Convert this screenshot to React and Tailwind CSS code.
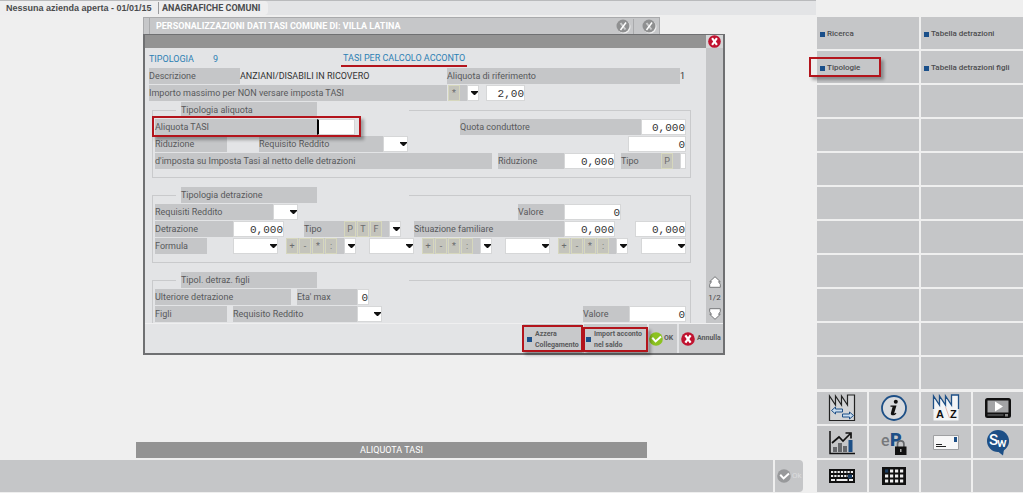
import clsx from 'clsx';

const menuItems = [
  'Ricerca',
  'Tabella detrazioni',
  'Tipologie',
  'Tabella detrazioni figli',
  ...Array(18).fill(''),
];

// Small building blocks of the form
function Row({ children }) {
  return <div className="flex h-4 items-stretch">{children}</div>;
}

function Label({ htmlFor, className, children }) {
  const classes = clsx('bg-[#c5c6c8] leading-4 whitespace-nowrap text-[#58595b]', className);
  return htmlFor ? (
    <label htmlFor={htmlFor} className={classes}>{children}</label>
  ) : (
    <span className={classes}>{children}</span>
  );
}

function Field({ id, value = '', className }) {
  return (
    <input
      id={id}
      type="text"
      defaultValue={value}
      aria-label={id}
      className={clsx(
        'min-w-0 border border-[#d6d7d8] bg-white pt-px text-right font-["Liberation_Mono",monospace] text-[11px] leading-4 text-[#333] outline-none',
        className
      )}
    />
  );
}

function Combo({ id, className }) {
  return (
    <span className={clsx('grid border border-[#d6d7d8] bg-white', className)}>
      <select id={id} aria-label={id} className="col-start-1 row-start-1 w-full min-w-0 appearance-none outline-none">
        <option></option>
      </select>
      <svg viewBox="0 0 7 4" className="pointer-events-none col-start-1 row-start-1 h-1 w-[7px] self-center justify-self-end">
        <path d="M0 0h7v1L4 4H3L0 1z" fill="#111" />
      </svg>
    </span>
  );
}

function Keys({ keys, className }) {
  return (
    <span className={clsx('flex gap-px bg-[#c5c6c8]', className)}>
      {keys.map((key) => (
        <button
          key={key}
          type="button"
          className="w-3 border border-[#d6d7bd] bg-[#c4c4bc] text-center leading-3 text-[#6b6c6e]"
        >
          {key}
        </button>
      ))}
    </span>
  );
}

function Group({ title, className, children }) {
  return (
    <fieldset className={clsx('ml-[3px] border border-[#c9cacc] pr-1 pl-0.5', className)}>
      <legend className="ml-[21px] w-[233px] px-[5px]">
        <Label className="block h-4 w-[136px]">{title}</Label>
      </legend>
      <div className="flex flex-col gap-px pt-px">{children}</div>
    </fieldset>
  );
}

// Red frame drawn around a highlighted control
function Highlight({ className }) {
  return (
    <span
      className={clsx(
        'pointer-events-none absolute border-2 border-[#b3141c] shadow-[3px_3px_3px_rgba(0,0,0,0.3)]',
        className
      )}
    />
  );
}

function Bullet() {
  return <span className="size-[5px] shrink-0 bg-[#1a4f8a]" />;
}

function CrossIcon({ color, className }) {
  return (
    <svg viewBox="0 0 14 14" className={className}>
      <circle cx="7" cy="7" r="6.8" fill={color} />
      <path d="M4.4 3.4l5.2 7.2M9.6 3.4l-5.2 7.2" stroke="#fff" strokeWidth="2.3" />
    </svg>
  );
}

function GreyCross() {
  return (
    <svg viewBox="0 0 15 15" className="size-[15px]">
      <circle cx="8" cy="8" r="6.5" fill="#eee" />
      <circle cx="7" cy="7" r="6.5" fill="#8f9091" />
      <path d="M4.5 4l5 6.5" stroke="#c9cacb" strokeWidth="2" />
      <path d="M10 3.5L4.5 11" stroke="#fff" strokeWidth="1.5" />
    </svg>
  );
}

function CheckIcon({ color, className }) {
  return (
    <svg viewBox="0 0 14 14" className={className}>
      <circle cx="7" cy="7" r="6.8" fill={color} />
      <path d="M3.2 5.8L6.6 9.4 12 4.4" fill="none" stroke="#fff" strokeWidth="2" />
    </svg>
  );
}

const tools = [
  {
    name: 'Cambio azienda',
    icon: (
      <>
        <path d="M1.5 26.5V2l6 9V2l6 9V2l6 9V1h7v25.5z" fill="#d3d4d6" stroke="#222" strokeWidth="1.2" />
        <path d="M3.5 16.5l4-3.5v2h7v3h-7v2z" fill="#c9dcef" stroke="#1d4f86" />
        <path d="M25.5 21.5l-4-3.5v2h-7v3h7v2z" fill="#c9dcef" stroke="#1d4f86" />
      </>
    ),
  },
  {
    name: 'Informazioni',
    icon: (
      <>
        <circle cx="14" cy="14" r="12" fill="#d9dbde" stroke="#1d4f86" strokeWidth="1.8" />
        <circle cx="15.8" cy="7.8" r="2" fill="#111" />
        <path d="M10.5 11.5h6l-2.2 7.3c-.2.9.5.9 1.5 0l.6.6c-1.7 2.6-6.3 2.8-5.5-.5l1.7-6.2h-2.1z" fill="#111" />
      </>
    ),
  },
  {
    name: 'Aziende A-Z',
    icon: (
      <>
        <path d="M1.5 26.5V2l6 9V2l6 9V2l6 9V1h7v25.5z" fill="#f4f5f6" />
        <path d="M1.5 15V2l6 9V2l6 9V2l6 9V1h7v14" fill="none" stroke="#1d4f86" strokeWidth="1.3" />
        <path d="M13.5 13l4 11" stroke="#e3b9b0" />
        <text x="4" y="24" fontSize="11" fontWeight="bold" fill="#111">A</text>
        <text x="18" y="24" fontSize="11" fontWeight="bold" fill="#111">Z</text>
      </>
    ),
  },
  {
    name: 'Video',
    icon: (
      <>
        <rect x="1" y="4" width="26" height="20" rx="2.5" fill="#111" />
        <rect x="3.5" y="6.5" width="21" height="12" fill="#a3a4a6" />
        <path d="M11 7.5l8 5-8 5z" fill="#fff" />
        <path d="M3.5 21h16" stroke="#77787a" />
        <path d="M21 20h3v2.5h-3z" fill="#888" />
      </>
    ),
  },
  {
    name: 'Statistiche',
    icon: (
      <>
        <path d="M2 3v22.5h25" fill="none" stroke="#111" strokeWidth="1.5" />
        <path d="M5 19h4v5H5zM10 15h4v9h-4zM15 18h4v6h-4z" fill="#66686b" />
        <path d="M20.5 12h4v12h-4z" fill="#1d4f86" />
        <path d="M4 15l7-6 4 4 7-7M17.5 5H23v5.5" fill="none" stroke="#111" strokeWidth="1.7" />
      </>
    ),
  },
  {
    name: 'eP',
    icon: (
      <>
        <text x="1" y="18" fontSize="16" fontWeight="500" fill="#77797c" fontFamily="Roboto">e</text>
        <text x="10" y="18" fontSize="18" fontWeight="900" fill="#1d4f86" fontFamily="Roboto">P</text>
        <path d="M17.5 19v-3a3.2 3.2 0 016.4 0v3" fill="none" stroke="#66686b" strokeWidth="1.7" />
        <path d="M15 18.5h11.5V27H15z" fill="#111" />
        <path d="M20.2 21h1.2v3h-1.2z" fill="#ccc" />
      </>
    ),
  },
  {
    name: 'Posta',
    icon: (
      <>
        <path d="M1.5 7.5h25v14h-25z" fill="#f7f7f7" stroke="#9fa0a2" />
        <path d="M22 9h3v5h-3z" fill="#1d4f86" />
        <path d="M4 16.5h6M4 18.5h10" stroke="#222" strokeWidth="1.2" />
      </>
    ),
  },
  {
    name: 'Sw',
    icon: (
      <>
        <circle cx="14" cy="13" r="11" fill="#1d4f86" />
        <path d="M12 22l7 5.5 1-6z" fill="#1d4f86" />
        <text x="5" y="17" fontSize="15" fontWeight="500" fill="#fff" fontFamily="Roboto">S</text>
        <text x="13" y="19" fontSize="13" fontWeight="500" fill="#fff" fontFamily="Roboto">w</text>
      </>
    ),
  },
  {
    name: 'Tastiera',
    icon: (
      <>
        <path d="M1 7h26v14H1z" fill="#111" />
        <path d="M3 10h22M3 14h22" stroke="#eee" strokeWidth="2.2" strokeDasharray="2.2 1.1" />
        <path d="M3 18h4M8.5 18h11M21 18h4" stroke="#eee" strokeWidth="2.2" />
        <path d="M20 12.5h4v4h-4z" fill="#1b3c60" />
      </>
    ),
  },
  {
    name: 'Tastierino',
    icon: (
      <>
        <path d="M2 5h24v18H2z" fill="#111" />
        <path d="M10 9h15M5 14h20M5 19h20" stroke="#eee" strokeWidth="3.2" strokeDasharray="3.2 1.8" />
        <path d="M5 7.4h3.2v3.2H5z" fill="#1b3c60" />
      </>
    ),
  },
  { name: '' },
  { name: '' },
];

function TopBar() {
  return (
    <header className="mr-px flex h-[15px] border-t border-[#b9babc] bg-[#e3e4e6]">
      <div className="flex w-[268px] items-center rounded-r bg-[#eeeeef] pl-1.5 text-[9px] leading-3 font-bold whitespace-nowrap text-[#4a4b4d]">
        <span className='w-[152px] shrink-0 font-["Liberation_Sans",sans-serif]'>Nessuna azienda aperta - 01/01/15</span>
        <h1 className="border-l border-[#9a9b9d] pl-[3px]">ANAGRAFICHE COMUNI</h1>
      </div>
    </header>
  );
}

function BackWindow() {
  return (
    <div className="flex h-[17px] w-full max-w-[517px] items-center border-t border-r border-l border-[#a9aaac] bg-[#c6c7c9] text-[9px] font-bold text-white">
      <span className="ml-[5px] flex-1 border-l border-[#a9aaac] pl-1.5 leading-4 whitespace-nowrap">
        PERSONALIZZAZIONI DATI TASI COMUNE DI: VILLA LATINA
      </span>
      <button type="button" aria-label="Chiudi scheda" className="border-r border-[#a9aaac] pr-0.5">
        <GreyCross />
      </button>
      <button type="button" aria-label="Chiudi finestra" className="pr-0.5 pl-2">
        <GreyCross />
      </button>
    </div>
  );
}

function FormBody() {
  return (
    <form className="flex min-w-0 flex-1 flex-col gap-px pt-[3px] pr-[15px] pl-1 text-[#333]">
      <div className="flex h-4 leading-4 text-[#2c80b4]">
        <span className="w-16">TIPOLOGIA</span>
        <span className="w-32">9</span>
        <h2 className="border-b-2 border-[#b3141c] px-0.5 leading-[14px]">TASI PER CALCOLO ACCONTO</h2>
      </div>
      <Row>
        <Label className="w-[91px]">Descrizione</Label>
        <span className="w-[207px] leading-4">ANZIANI/DISABILI IN RICOVERO</span>
        <Label className="flex-1">Aliquota di riferimento</Label>
        <span className="w-[11px] leading-4">1</span>
      </Row>
      <Row>
        <Label htmlFor="importo" className="w-[298px]">Importo massimo per NON versare imposta TASI</Label>
        <Keys keys={['*']} className="ml-px w-[19px]" />
        <Combo id="importo-tipo" className="w-3" />
        <Field id="importo" value="2,00" className="ml-[7px] w-[39px]" />
      </Row>

      <Group title="Tipologia aliquota" className="pb-2">
        <Row>
          <div className="relative flex">
            <Label htmlFor="aliquota" className="w-[162px]">Aliquota TASI</Label>
            <Field id="aliquota" className="w-[38px] border-l-2 border-l-black" />
            <Highlight className="-top-[3px] -right-1.5 -bottom-0.5 -left-[3px]" />
          </div>
          <Label htmlFor="quota" className="ml-[105px] flex-1">Quota conduttore</Label>
          <Field id="quota" value="0,000" className="w-[45px]" />
        </Row>
        <Row>
          <Label className="w-[72px]">Riduzione</Label>
          <Label htmlFor="requisito" className="ml-8 w-[124px]">Requisito Reddito</Label>
          <Combo id="requisito" className="w-[25px]" />
          <Field id="riduzione-valore" value="0" className="ml-auto w-[58px]" />
        </Row>
        <Row>
          <Label className="flex-1">d'imposta su Imposta Tasi al netto delle detrazioni</Label>
          <Label htmlFor="riduzione" className="ml-1.5 w-[66px]">Riduzione</Label>
          <Field id="riduzione" value="0,000" className="w-[51px]" />
          <Label htmlFor="tipo-riduzione" className="ml-1.5 w-10">Tipo</Label>
          <Keys keys={['P']} className="w-[19px]" />
          <Field id="tipo-riduzione" className="w-1.5" />
        </Row>
      </Group>

      <Group title="Tipologia detrazione" className="mt-2 pb-2">
        <Row>
          <Label htmlFor="requisiti" className="w-[118px]">Requisiti Reddito</Label>
          <Combo id="requisiti" className="w-[25px]" />
          <Label htmlFor="valore" className="ml-auto w-[46px]">Valore</Label>
          <Field id="valore" value="0" className="mr-[65px] w-[57px]" />
        </Row>
        <Row>
          <Label htmlFor="detrazione" className="w-[78px]">Detrazione</Label>
          <Field id="detrazione" value="0,000" className="w-[51px]" />
          <Label htmlFor="tipo-detrazione" className="ml-5 w-10">Tipo</Label>
          <Keys keys={['P', 'T', 'F']} className="w-[45px]" />
          <Combo id="tipo-detrazione" className="w-3" />
          <Label htmlFor="situazione" className="ml-[13px] flex-1">Situazione familiare</Label>
          <Field id="situazione" value="0,000" className="w-[51px]" />
          <Field id="situazione-valore" value="0,000" className="ml-5 w-[51px]" />
        </Row>
        <Row>
          <Label htmlFor="formula-1" className="mr-[26px] w-[52px]">Formula</Label>
          {[1, 2, 3].map((n) => (
            <div key={n} className="mr-[13px] flex">
              <Combo id={`formula-${n}`} className="w-[45px]" />
              <Keys keys={['+', '-', '*', ':']} className="ml-2 w-[58px]" />
              <Combo id={`operatore-${n}`} className="w-3" />
            </div>
          ))}
          <Combo id="formula-4" className="ml-auto w-[45px]" />
        </Row>
      </Group>

      <Group title="Tipol. detraz. figli" className="mt-2 border-b-0 pb-px">
        <Row>
          <Label className="w-[136px]">Ulteriore detrazione</Label>
          <Label htmlFor="eta-max" className="ml-1.5 w-[60px]">Eta' max</Label>
          <Field id="eta-max" value="0" className="w-3" />
        </Row>
        <Row>
          <Label className="w-[72px]">Figli</Label>
          <Label htmlFor="requisito-figli" className="ml-1.5 w-[124px]">Requisito Reddito</Label>
          <Combo id="requisito-figli" className="w-[25px]" />
          <Label htmlFor="valore-figli" className="ml-auto w-[46px]">Valore</Label>
          <Field id="valore-figli" value="0" className="w-[57px]" />
        </Row>
      </Group>
    </form>
  );
}

function Pager() {
  return (
    <div className="flex w-[17px] flex-col items-center justify-end gap-0.5 bg-[#c5c6c8] pb-[3px] text-[8px] leading-4 text-[#444]">
      <button type="button" aria-label="Pagina precedente">
        <svg viewBox="0 0 12 12" className="size-3">
          <path d="M6 .7l5.3 5H9.5l1.8 2.6v3H.7v-3l1.8-2.6H.7z" fill="#fff" stroke="#77787a" />
        </svg>
      </button>
      <span>1/2</span>
      <button type="button" aria-label="Pagina successiva">
        <svg viewBox="0 0 12 12" className="size-3">
          <path d="M6 11.3l5.3-5H9.5l1.8-2.6v-3H.7v3l1.8 2.6H.7z" fill="#fff" stroke="#77787a" />
        </svg>
      </button>
    </div>
  );
}

function DialogFooter() {
  return (
    <div className="flex h-[30px] justify-end gap-0.5 border-t border-[#efeff0] text-[7px] leading-[11px] font-bold whitespace-nowrap text-[#58595b]">
      <button type="button" className="relative flex w-[59px] items-center gap-[3px] bg-[#c8c9cb] pt-0.5 pl-1 text-left">
        <Bullet />
        <span>Azzera<br />Collegamento</span>
        <Highlight className="-inset-x-px inset-y-px" />
      </button>
      <button type="button" className="relative flex w-[63px] items-center gap-[3px] bg-[#c8c9cb] pt-0.5 pl-0.5 text-left">
        <Bullet />
        <span>Import acconto<br />nel saldo</span>
        <Highlight className="-inset-x-px top-[3px] bottom-px" />
      </button>
      <button type="button" className="flex w-7 items-center gap-px bg-[#c8c9cb]">
        <CheckIcon color="#8cc220" className="size-3.5 shrink-0" />
        OK
      </button>
      <button type="button" className="flex w-11 items-center gap-0.5 bg-[#c8c9cb] pl-0.5">
        <CrossIcon color="#c0122f" className="size-3.5 shrink-0" />
        Annulla
      </button>
    </div>
  );
}

function Dialog() {
  return (
    <section className="w-full max-w-[582px] border-2 border-t border-[#6f7072] bg-[#e3e4e6] text-[9px]">
      <div className="flex h-[13px] justify-end bg-[#939393]">
        <button type="button" aria-label="Chiudi" className="flex w-[17px] items-center justify-center bg-[#d5d6d7]">
          <CrossIcon color="#c0122f" className="size-[13px]" />
        </button>
      </div>
      <div className="flex">
        <FormBody />
        <Pager />
      </div>
      <DialogFooter />
    </section>
  );
}

function Sidebar() {
  return (
    <aside className="w-[206px] shrink-0 pt-[17px] text-[8px] font-medium text-[#4c4d4f]">
      <nav className="grid grid-cols-2 gap-0.5">
        {menuItems.map((item, index) => (
          <button key={index} type="button" className="relative flex h-8 items-center gap-0.5 bg-[#c5c6c8] pt-0.5 pl-[3px]">
            {item && <Bullet />}
            {item}
            {item === 'Tipologie' && <Highlight className="inset-y-[6px] -left-2 w-[72px]" />}
          </button>
        ))}
      </nav>
      <div className='mt-[3px] grid grid-cols-4 gap-0.5 font-["Liberation_Sans",sans-serif]'>
        {tools.map((tool, index) => (
          <button key={index} type="button" aria-label={tool.name} className="flex h-8 items-center justify-center bg-[#c5c6c8]">
            {tool.icon && <svg viewBox="0 0 28 28" className="size-7 overflow-visible">{tool.icon}</svg>}
          </button>
        ))}
      </div>
    </aside>
  );
}

function App() {
  return (
    <div className="flex min-h-screen bg-[#efefef] font-[Roboto,sans-serif]">
      <div className="flex min-w-0 flex-1 flex-col">
        <TopBar />
        <main className="mt-0.5 mb-4 pl-[143px]">
          <BackWindow />
          <Dialog />
        </main>
        <footer className="mt-auto pb-px">
          <p className="mr-[170px] ml-[136px] h-4 bg-[#939393] text-center text-[9px] leading-4 text-white">
            ALIQUOTA TASI
          </p>
          <div className="mt-0.5 mr-3.5 flex h-8 gap-0.5">
            <div className="flex-1 bg-[#c5c6c8]" />
            <button type="button" className="flex w-7 items-center gap-px rounded-r bg-[#c5c6c8] pl-0.5 text-[8px] text-[#dcdddf]">
              <CheckIcon color="#98999b" className="size-3.5 shrink-0" />
              Ok
            </button>
          </div>
        </footer>
      </div>
      <Sidebar />
    </div>
  );
}

export default App;
